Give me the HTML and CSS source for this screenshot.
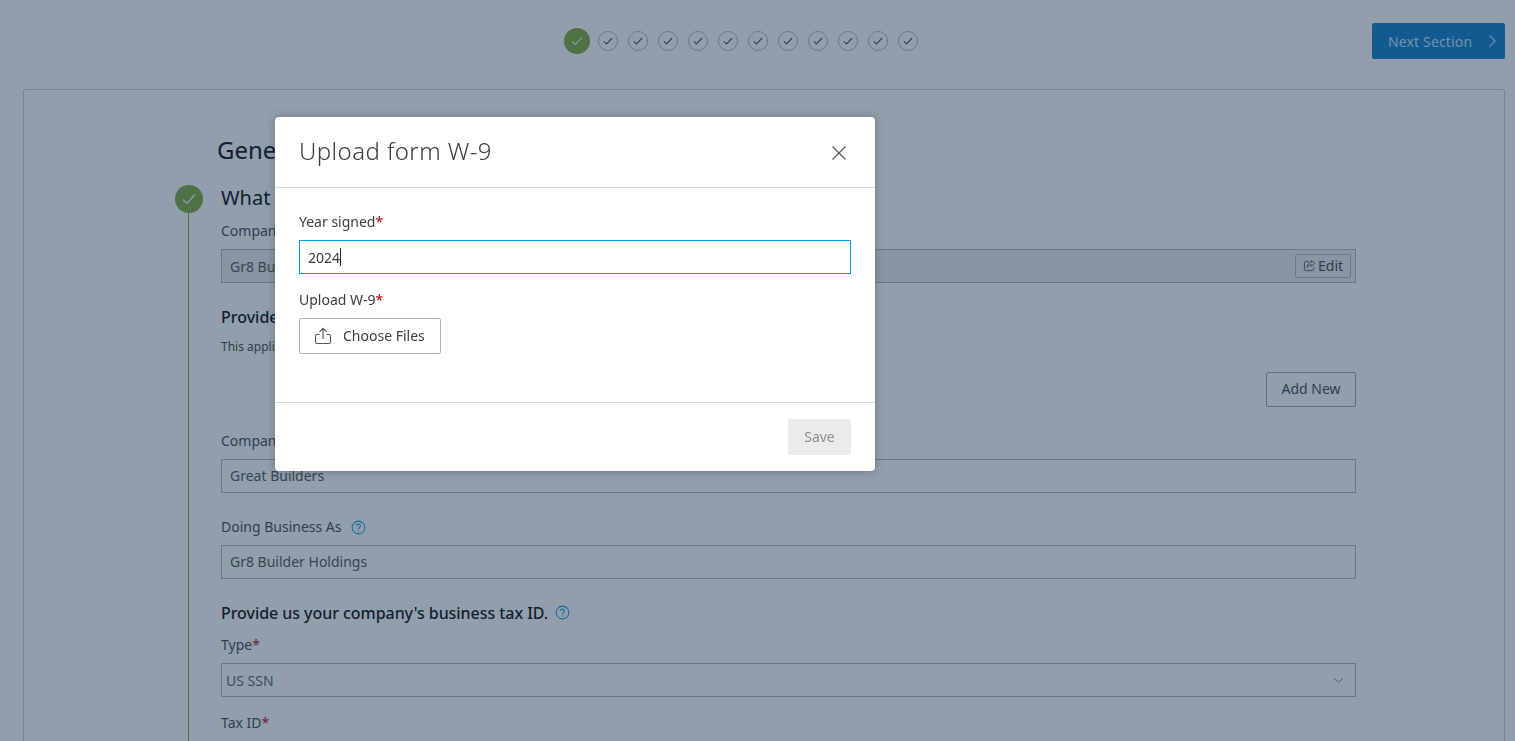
FILE: index.html
```html
<!DOCTYPE html>
<html lang="en">
<head>
<meta charset="utf-8">
<title>Upload form W-9</title>
<link rel="stylesheet" href="styles.css">
</head>
<body>
<div class="page">
  <header class="topbar">
    <ol class="stepper">
      <li class="step step-current"><svg viewBox="0 0 16 16" class="check"><path d="M2.5 8.5 6 12l7.5-8"/></svg></li>
      <li class="step"><svg viewBox="0 0 16 16" class="check"><path d="M2.5 8.5 6 12l7.5-8"/></svg></li>
      <li class="step"><svg viewBox="0 0 16 16" class="check"><path d="M2.5 8.5 6 12l7.5-8"/></svg></li>
      <li class="step"><svg viewBox="0 0 16 16" class="check"><path d="M2.5 8.5 6 12l7.5-8"/></svg></li>
      <li class="step"><svg viewBox="0 0 16 16" class="check"><path d="M2.5 8.5 6 12l7.5-8"/></svg></li>
      <li class="step"><svg viewBox="0 0 16 16" class="check"><path d="M2.5 8.5 6 12l7.5-8"/></svg></li>
      <li class="step"><svg viewBox="0 0 16 16" class="check"><path d="M2.5 8.5 6 12l7.5-8"/></svg></li>
      <li class="step"><svg viewBox="0 0 16 16" class="check"><path d="M2.5 8.5 6 12l7.5-8"/></svg></li>
      <li class="step"><svg viewBox="0 0 16 16" class="check"><path d="M2.5 8.5 6 12l7.5-8"/></svg></li>
      <li class="step"><svg viewBox="0 0 16 16" class="check"><path d="M2.5 8.5 6 12l7.5-8"/></svg></li>
      <li class="step"><svg viewBox="0 0 16 16" class="check"><path d="M2.5 8.5 6 12l7.5-8"/></svg></li>
      <li class="step"><svg viewBox="0 0 16 16" class="check"><path d="M2.5 8.5 6 12l7.5-8"/></svg></li>
    </ol>
    <button class="next-btn" type="button">Next Section
      <svg viewBox="0 0 10 16" class="next-icon"><path d="M1.5 1.5 8 8l-6.5 6.5"/></svg>
    </button>
  </header>

  <main class="card">
    <h1 class="page-title">Gene</h1>
    <section class="timeline-section">
      <div class="rail">
        <span class="rail-dot"><svg viewBox="0 0 16 16" class="rail-check"><path d="M2 8.5 6 12.5l8-9"/></svg></span>
        <span class="rail-line"></span>
      </div>
      <div class="form">
        <h2 class="question">What</h2>
        <div class="label label-first">Company</div>
        <div class="field field-disabled">
          <span>Gr8 Bu</span>
          <button class="edit-btn" type="button">
            <svg viewBox="0 0 14 14" class="edit-icon"><path d="M6 2.500H3a1.500 1.500 0 0 0-1.500 1.500v7A1.500 1.500 0 0 0 3 12.500h7a1.500 1.500 0 0 0 1.500-1.500V9M12.500 4.500 9 1.500v2C6 3.500 4.500 5.500 4.500 9c1-2 2.500-2.700 4.500-2.700v1.700z"/></svg>Edit
          </button>
        </div>
        <h3 class="subhead subhead-first">Provide</h3>
        <p class="hint">This appli</p>
        <div class="add-row"><button class="outline-btn" type="button">Add New</button></div>
        <div class="label label-company">Company</div>
        <div class="field">Great Builders</div>
        <div class="label label-dba">Doing Business As
          <svg viewBox="0 0 16 16" class="help help-dba"><circle cx="8" cy="8" r="6.800"/><path d="M6 6.300a2 2 0 1 1 3.100 1.700C8.300 8.500 8 9 8 9.800M8 11.200v1"/></svg>
        </div>
        <div class="field">Gr8 Builder Holdings</div>
        <h3 class="subhead subhead-tax">Provide us your company's business tax ID.
          <svg viewBox="0 0 16 16" class="help help-tax"><circle cx="8" cy="8" r="6.800"/><path d="M6 6.300a2 2 0 1 1 3.100 1.700C8.300 8.500 8 9 8 9.800M8 11.200v1"/></svg>
        </h3>
        <div class="label label-type">Type<span class="req">*</span></div>
        <div class="field field-select">US SSN
          <svg viewBox="0 0 12 8" class="chevron"><path d="M1 1.500 6 6l5-4.500"/></svg>
        </div>
        <div class="label label-tax">Tax ID<span class="req">*</span></div>
      </div>
    </section>
  </main>
</div>

<div class="overlay">
  <div class="modal" role="dialog">
    <div class="modal-head">
      <h2 class="modal-title">Upload form W-9</h2>
      <svg viewBox="0 0 16 16" class="close"><path d="M1.500 1.500l13 13M14.500 1.500l-13 13"/></svg>
    </div>
    <div class="modal-body">
      <div class="m-label">Year signed<span class="req">*</span></div>
      <div class="m-input">2024<span class="caret"></span></div>
      <div class="m-label m-label-second">Upload W-9<span class="req">*</span></div>
      <button class="file-btn" type="button">
        <svg viewBox="0 0 18 18" class="upload"><path d="M9 12V1.500M5.500 4.800 9 1.300l3.500 3.500M5.500 7.500H3a1.500 1.500 0 0 0-1.500 1.500v6A1.500 1.500 0 0 0 3 16.500h12a1.500 1.500 0 0 0 1.500-1.500V9A1.500 1.500 0 0 0 15 7.500h-2.500"/></svg>
        Choose Files
      </button>
    </div>
    <div class="modal-foot">
      <button class="save-btn" type="button">Save</button>
    </div>
  </div>
</div>
</body>
</html>
```
FILE: styles.css
```css
* { box-sizing: border-box; }
html, body { margin: 0; height: 100%; }
body {
  height: 741px;
  overflow: hidden;
  background: #fff;
  color: #3c3c3c;
  font-family: "Noto Sans", "Open Sans", Arial, sans-serif;
  font-size: 14px;
}
button { font-family: inherit; font-size: inherit; cursor: pointer; }
h1, h2, h3, p, ol { margin: 0; padding: 0; font-weight: 400; }

.page { height: 741px; overflow: hidden; }

.topbar {
  display: flex;
  align-items: center;
  height: 82px;
  padding: 0 10px 0 564px;
}
.stepper { display: flex; align-items: center; gap: 10px; list-style: none; margin-top: -1px; }
.step {
  display: flex;
  align-items: center;
  justify-content: center;
  width: 20px;
  height: 20px;
  border: 1px solid #b0b3b5;
  border-radius: 50%;
}
.step-current {
  width: 26px;
  height: 26px;
  background: #78a530;
  border: 0;
  margin-right: -2px;
}
.check { width: 12px; height: 12px; fill: none; stroke: #4a4a4a; stroke-width: 1.500; }
.step-current .check { stroke: #fff; width: 14px; height: 14px; stroke-width: 1.200; }

.next-btn {
  display: flex;
  align-items: center;
  justify-content: space-between;
  margin-left: auto;
  width: 133px;
  height: 36px;
  padding: 0 8px 0 16px;
  background: #0076c4;
  border: 0;
  border-radius: 2px;
  color: #c9e2f7;
  font-size: 14px;
  letter-spacing: 0.15px;
}
.next-icon { width: 9px; height: 14px; fill: none; stroke: currentColor; stroke-width: 1.300; }

.card {
  margin: 7px 10px 0 23px;
  height: 700px;
  border: 1px solid #c4c7c9;
  border-radius: 2px;
  padding: 44px 148px 0 193px;
}
.page-title { font-size: 24px; line-height: 32px; color: #000; }

.timeline-section { display: grid; grid-template-columns: 28px 1fr; column-gap: 18px; margin: 16px 0 0 -42px; }
.rail { display: flex; flex-direction: column; align-items: center; padding-top: 3px; }
.rail-dot {
  display: flex;
  align-items: center;
  justify-content: center;
  width: 28px;
  height: 28px;
  border-radius: 50%;
  background: #78a530;
  flex: none;
}
.rail-check { width: 16px; height: 16px; fill: none; stroke: #fff; stroke-width: 1.200; }
.rail-line { width: 1px; height: 600px; background: #78a530; margin-left: -1px; }

.form { min-width: 0; }
.question { font-size: 20px; line-height: 28px; color: #000; padding-top: 2px; }
.label { font-size: 14px; line-height: 20px; color: #3c3c3c; display: flex; align-items: center; }
.label-first { margin-top: 9px; }
.label-company { margin-top: 24px; }
.label-dba { margin-top: 24px; }
.label-type { margin-top: 11px; }
.label-tax { margin-top: 16px; }
.req { color: #a00; }

.field {
  display: flex;
  align-items: center;
  justify-content: space-between;
  height: 34px;
  margin-top: 8px;
  padding: 0 4px 2px 8px;
  border: 1px solid #b0b3b5;
  color: #4a4a4a;
}
.field-disabled { background: #ececec; padding-bottom: 0; }
.field-select { padding: 0 11px 0 4px; color: #5a5a5a; }

.edit-btn {
  display: flex;
  align-items: center;
  gap: 2px;
  height: 24px;
  width: 56px;
  padding: 0 0 1px 7px;
  background: transparent;
  border: 1px solid #b0b3b5;
  border-radius: 2px;
  color: #3c3c3c;
}
.edit-icon { width: 13px; height: 13px; fill: none; stroke: #4a4a4a; stroke-width: 1; }

.subhead { font-size: 16px; line-height: 22px; font-weight: 500; color: #000; display: flex; align-items: center; }
.subhead-first { margin-top: 23px; }
.subhead-tax { margin-top: 23px; letter-spacing: -0.05px; }
.hint { font-size: 12px; line-height: 16px; margin-top: 11px; color: #3c3c3c; }

.add-row { display: flex; justify-content: flex-end; margin-top: 17px; }
.outline-btn {
  width: 90px;
  height: 35px;
  padding: 0 0 2px;
  background: transparent;
  border: 1px solid #9a9d9f;
  border-radius: 2px;
  color: #3c3c3c;
}

.help { width: 15px; height: 15px; margin-left: 7px; fill: none; stroke: #0696d7; stroke-width: 1.100; }
.help-dba { margin-left: 9px; }
.help-tax { margin-top: -2px; }
.chevron { width: 11px; height: 7px; fill: none; stroke: #777; stroke-width: 1.100; }

.overlay {
  position: fixed;
  inset: 0;
  padding: 117px 0 0 275px;
  background: rgba(36, 61, 89, 0.5);
}
.modal {
  width: 600px;
  height: 354px;
  background: #fff;
  border-radius: 4px;
  box-shadow: 0 0 10px rgba(0, 0, 0, 0.25);
}
.modal-head {
  display: flex;
  align-items: center;
  justify-content: space-between;
  height: 71px;
  padding: 0 28px 0 24px;
  border-bottom: 1px solid #d9d9d9;
}
.modal-title { font-size: 24px; line-height: 32px; font-weight: 300; letter-spacing: 0.42px; color: #3c3c3c; margin-top: -2px; }
.close { width: 16px; height: 16px; fill: none; stroke: #555; stroke-width: 1.200; margin-top: 2px; }

.modal-body { height: 215px; padding: 24px 24px 0; border-bottom: 1px solid #d9d9d9; }
.m-label { font-size: 14px; line-height: 20px; color: #3c3c3c; }
.m-label-second { margin-top: 16px; }
.m-input {
  display: flex;
  align-items: center;
  height: 34px;
  margin-top: 8px;
  padding: 0 8px;
  border: 1px solid #0696d7;
  color: #3c3c3c;
}
.caret { width: 1px; height: 18px; background: #222; }

.file-btn {
  display: flex;
  align-items: center;
  gap: 11px;
  width: 142px;
  height: 36px;
  margin-top: 8px;
  padding: 0 0 2px 14px;
  background: #fff;
  border: 1px solid #b0b3b5;
  border-radius: 2px;
  color: #3c3c3c;
}
.upload { width: 18px; height: 18px; fill: none; stroke: #555; stroke-width: 1.100; flex: none; margin-top: 2px; }

.modal-foot { display: flex; justify-content: flex-end; padding: 16px 24px 0; }
.save-btn {
  width: 63px;
  height: 36px;
  padding: 0 0 2px;
  background: #ebebeb;
  border: 0;
  border-radius: 2px;
  color: #8e8e8e;
}
```
